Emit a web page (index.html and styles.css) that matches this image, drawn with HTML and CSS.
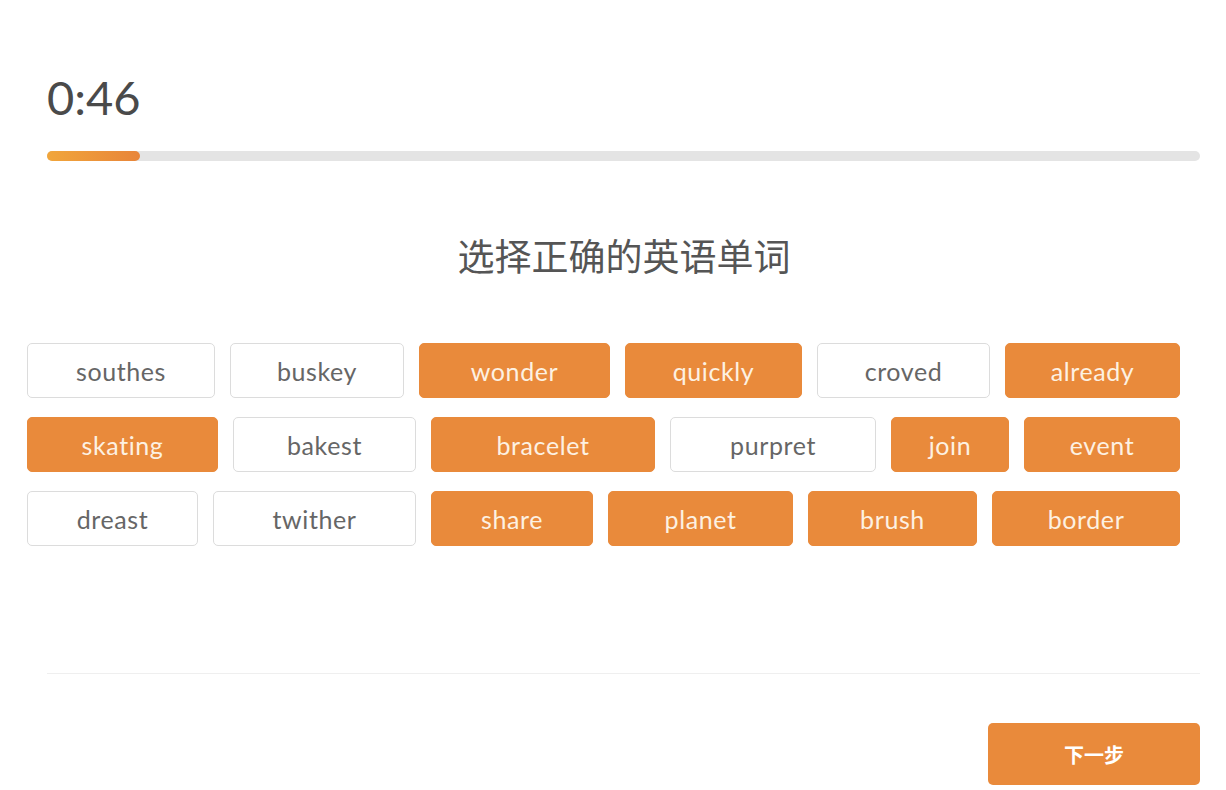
FILE: index.html
```html
<!DOCTYPE html>
<html>
  <head>
    <title>选择正确的英语单词</title>
    <link rel="stylesheet" href="styles.css">
  </head>
  <body>
    <div class="quiz">
      <div class="top">
        <div class="timer">0:46</div>
        <div class="progress"><div class="progress-fill" style="width: 93px"></div></div>
      </div>

      <h1 class="question">选择正确的英语单词</h1>

      <div class="words">
        <div class="row">
          <button class="chip" style="width: 188px">southes</button>
          <button class="chip" style="width: 174px">buskey</button>
          <button class="chip on" style="width: 191px">wonder</button>
          <button class="chip on" style="width: 177px">quickly</button>
          <button class="chip" style="width: 173px">croved</button>
          <button class="chip on" style="width: 175px">already</button>
        </div>
        <div class="row">
          <button class="chip on" style="width: 191px">skating</button>
          <button class="chip" style="width: 183px">bakest</button>
          <button class="chip on" style="width: 224px">bracelet</button>
          <button class="chip" style="width: 206px">purpret</button>
          <button class="chip on" style="width: 118px">join</button>
          <button class="chip on" style="width: 156px">event</button>
        </div>
        <div class="row">
          <button class="chip" style="width: 171px">dreast</button>
          <button class="chip" style="width: 203px">twither</button>
          <button class="chip on" style="width: 162px">share</button>
          <button class="chip on" style="width: 185px">planet</button>
          <button class="chip on" style="width: 169px">brush</button>
          <button class="chip on" style="width: 188px">border</button>
        </div>
      </div>

      <div class="bottom">
        <button class="next">下一步</button>
      </div>
    </div>
  </body>
</html>
```

FILE: styles.css
```css
body {
  margin: 0;
  background: #fff;
  font-family: Lato, "Noto Sans CJK SC", sans-serif;
}
.top {
  padding: 70px 26px 0 47px;
}
.timer {
  font-size: 47px;
  line-height: 55px;
  color: #4a4a4a;
}
.progress {
  margin-top: 26px;
  height: 10px;
  border-radius: 5px;
  background-color: #e4e4e4;
}
.progress-fill {
  height: 10px;
  border-radius: 5px;
  background: linear-gradient(to right, #f1a63b, #e8853a);
}
.question {
  margin: 72px 0 0 0;
  padding-left: 22px;
  text-align: center;
  font-family: "Noto Sans CJK SC", sans-serif;
  font-weight: normal;
  font-size: 37px;
  line-height: 44px;
  color: #555;
}
.words {
  margin-top: 66px;
  padding-left: 27px;
  display: flex;
  flex-direction: column;
  gap: 19px;
}
.row {
  display: flex;
  gap: 15px;
}
.chip {
  height: 55px;
  padding: 0;
  border: 1px solid #dcdcdc;
  border-radius: 5px;
  background-color: #fff;
  color: #666;
  font-family: Lato, sans-serif;
  font-size: 25px;
  letter-spacing: 0.6px;
  box-sizing: border-box;
  cursor: pointer;
}
.chip.on {
  border-color: #e98a3b;
  background-color: #e98a3b;
  color: #fdf1e2;
}
.bottom {
  margin: 127px 26px 0 47px;
  padding-top: 49px;
  border-top: 1px solid #efefef;
  display: flex;
  justify-content: flex-end;
}
.next {
  width: 212px;
  height: 62px;
  border: none;
  border-radius: 5px;
  background-color: #e98a3b;
  color: #fff;
  font-family: "Noto Sans CJK SC", sans-serif;
  font-weight: bold;
  font-size: 20px;
  cursor: pointer;
}
```
